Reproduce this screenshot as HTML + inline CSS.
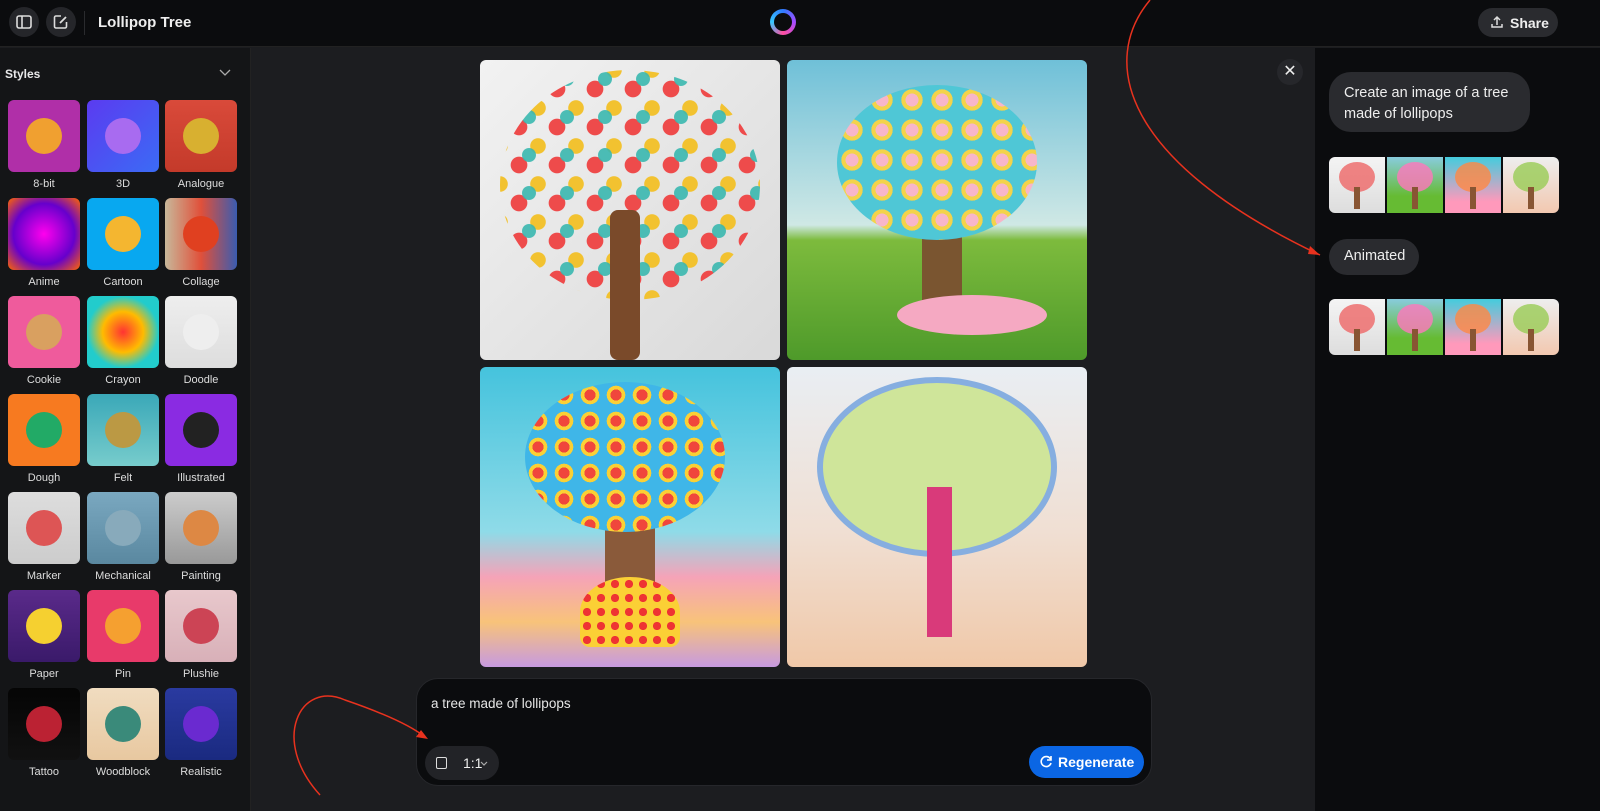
<!DOCTYPE html>
<html><head><meta charset="utf-8"><style>
*{box-sizing:border-box;margin:0;padding:0}
body{width:1600px;height:811px;overflow:hidden;background:#1c1d20;font-family:"Liberation Sans",sans-serif;color:#e8e8ea;position:relative}
.top{position:absolute;left:0;top:0;width:1600px;height:47px;background:#0b0c0e;border-bottom:1px solid #222}
.ib{position:absolute;top:7px;width:30px;height:30px;border-radius:50%;background:#25262a}
.left{position:absolute;left:0;top:48px;width:251px;height:763px;background:#141517;border-right:1px solid #222}
.right{position:absolute;left:1315px;top:48px;width:285px;height:763px;background:#0b0c0e}
.tile{position:absolute;width:72px;height:72px;border-radius:6px;overflow:hidden}
.lab{position:absolute;width:80px;text-align:center;font-size:11px;color:#ddd}
.img{position:absolute;width:300px;height:300px;border-radius:6px;overflow:hidden}
.th{position:absolute;width:56px;height:56px;overflow:hidden}
.bubble{position:absolute;background:#2a2b2f;border-radius:22px;font-size:15px;color:#eee}
</style></head><body>
<div class="top">
 <div class="ib" style="left:9px"><svg width="30" height="30"><rect x="8" y="9" width="14" height="12" rx="2" fill="none" stroke="#ddd" stroke-width="1.6"/><line x1="13" y1="9" x2="13" y2="21" stroke="#ddd" stroke-width="1.6"/></svg></div>
 <div class="ib" style="left:46px"><svg width="30" height="30"><path d="M15 9H10a1.5 1.5 0 0 0-1.5 1.5v9A1.5 1.5 0 0 0 10 21h9a1.5 1.5 0 0 0 1.5-1.5V15" fill="none" stroke="#ddd" stroke-width="1.6"/><path d="M14 16l6-6" stroke="#ddd" stroke-width="1.8"/></svg></div>
 <div style="position:absolute;left:84px;top:11px;width:1px;height:24px;background:#2a2b2e"></div>
 <div style="position:absolute;left:98px;top:14px;font-size:15px;font-weight:bold;color:#eee">Lollipop Tree</div>
 <div style="position:absolute;left:770px;top:9px;width:26px;height:26px;border-radius:50%;background:conic-gradient(#2f7bff,#a54bff,#ff4fa0,#37c8ff,#2f7bff)"><div style="margin:4px;width:18px;height:18px;border-radius:50%;background:#0b0c0e"></div></div>
 <div style="position:absolute;left:1478px;top:8px;width:80px;height:29px;border-radius:15px;background:#2a2b2f;font-size:14px;font-weight:bold;color:#eee;padding:7px 0 0 32px">Share
  <svg style="position:absolute;left:12px;top:7px" width="14" height="14"><path d="M7 10V2M4 5l3-3 3 3M2 9v3h10V9" fill="none" stroke="#ddd" stroke-width="1.5"/></svg></div>
</div>
<div class="left">
 <div style="position:absolute;left:5px;top:19px;font-size:12px;font-weight:bold">Styles</div>
 <svg style="position:absolute;left:219px;top:21px" width="12" height="8"><path d="M1 1l5 5 5-5" fill="none" stroke="#aaa" stroke-width="1.3"/></svg>
</div>
<div id="tiles"></div>
<div class="img" style="left:480px;top:60px;background:linear-gradient(135deg,#f2f2f2,#d9d9d9)">
 <div style="position:absolute;left:20px;top:10px;width:260px;height:230px;border-radius:50%;background:radial-gradient(circle,#ee4b4b 30%,transparent 32%) 0 0/38px 38px,radial-gradient(circle,#f2c230 28%,transparent 30%) 19px 19px/38px 38px"></div>
 <div style="position:absolute;left:20px;top:10px;width:260px;height:230px;border-radius:50%;background:radial-gradient(circle,#3ab8b0 25%,transparent 27%) 10px 28px/38px 38px;opacity:.9"></div>
 <div style="position:absolute;left:130px;top:150px;width:30px;height:150px;background:#7a4a2a;border-radius:8px"></div></div>
<div class="img" style="left:787px;top:60px;background:linear-gradient(#6fc0d8,#cfe8e5 55%,#7dbb3d 60%,#4e9a2a)">
 <div style="position:absolute;left:135px;top:150px;width:40px;height:110px;background:#7a5530"></div>
 <div style="position:absolute;left:50px;top:25px;width:200px;height:155px;border-radius:50%;background:radial-gradient(circle,#f7b6c9 30%,#f3d34a 31%,#f3d34a 50%,#4fc7d6 51%)0 0/30px 30px"></div>
 <div style="position:absolute;left:110px;top:235px;width:150px;height:40px;border-radius:50%;background:#f5a9c2"></div></div>
<div class="img" style="left:480px;top:367px;background:linear-gradient(#45c3dd,#8fdbe8 55%,#f5a3b8 70%,#f8c37a 85%,#c79ae0)">
 <div style="position:absolute;left:125px;top:140px;width:50px;height:110px;background:#8a5a3a"></div>
 <div style="position:absolute;left:45px;top:15px;width:200px;height:150px;border-radius:50%;background:radial-gradient(circle,#f0463c 30%,#fbd035 31%,#fbd035 50%,#3fb6e8 51%)0 0/26px 26px"></div>
 <div style="position:absolute;left:100px;top:210px;width:100px;height:70px;border-radius:50% 50% 10px 10px;background:radial-gradient(circle,#e33 40%,#fbd035 41%)0 0/14px 14px"></div></div>
<div class="img" style="left:787px;top:367px;background:linear-gradient(#e9eef3,#f0dfd3 55%,#f0c8a8)">
 <div style="position:absolute;left:30px;top:10px;width:240px;height:180px;border-radius:50%;background:#cfe59a;border:6px solid #86aee0"></div>
 <div style="position:absolute;left:140px;top:120px;width:25px;height:150px;background:#d93a7a"></div></div>
<div style="position:absolute;left:416px;top:678px;width:736px;height:108px;border-radius:22px;background:#0b0c0e;border:1px solid #26272b">
 <div style="position:absolute;left:14px;top:17px;font-size:13.5px;color:#e6e6e6">a tree made of lollipops</div>
 <div style="position:absolute;left:8px;top:67px;width:74px;height:34px;border-radius:17px;background:#222327;font-size:14px;padding:9px 0 0 38px;color:#eee">1:1</div>
 <div style="position:absolute;left:19px;top:78px;width:11px;height:12px;border:1.5px solid #ddd;border-radius:2px"></div>
 <svg style="position:absolute;left:63px;top:82px" width="8" height="6"><path d="M1 1l3 3 3-3" fill="none" stroke="#aaa" stroke-width="1.2"/></svg>
 <div style="position:absolute;left:612px;top:67px;width:115px;height:32px;border-radius:16px;background:#0b66e4;font-size:14px;font-weight:bold;color:#fff;padding:8px 0 0 29px">Regenerate</div>
 <svg style="position:absolute;left:622px;top:76px" width="14" height="14"><path d="M11.5 4A5 5 0 1 0 12 8" fill="none" stroke="#fff" stroke-width="1.6"/><path d="M12 1v4H8" fill="none" stroke="#fff" stroke-width="1.6"/></svg>
</div>
<div class="right">
 <div style="position:absolute;left:-38px;top:11px;width:26px;height:26px;border-radius:50%;background:#26272b;color:#eee;font-size:16px;text-align:center;line-height:26px">✕</div>
 <div class="bubble" style="left:14px;top:24px;width:201px;height:60px;padding:11px 15px;line-height:21px;font-size:14.5px">Create an image of a tree made of lollipops</div>
 <div class="bubble" style="left:14px;top:191px;width:90px;height:36px;padding:9px 15px;font-size:14.5px">Animated</div>
</div>
<div id="thumbs"></div>
<svg style="position:absolute;left:0;top:0" width="1600" height="811"><path d="M1150 0C1100 60 1120 160 1320 255" fill="none" stroke="#e8321e" stroke-width="1.5"/><path d="M1320 255l-10-9 -2 8z" fill="#e8321e"/><path d="M320 795C270 740 300 680 345 700 380 712 410 725 425 737" fill="none" stroke="#e8321e" stroke-width="1.5"/><path d="M428 739l-12-2 5-7z" fill="#e8321e"/></svg>
<script>
var n=[["8-bit","linear-gradient(#b02fa8,#b02fa8)","#f0a030"],["3D","linear-gradient(135deg,#5b3bf0,#3b6bf5)","#a86bf0"],["Analogue","linear-gradient(#d94a3a,#c43a2a)","#d8b030"],["Anime","radial-gradient(#f0e,#60c 60%,#f60)","#fff0"],["Cartoon","linear-gradient(#08a8f0,#08a8f0)","#f4b630"],["Collage","linear-gradient(90deg,#c8b89a,#e0503a 50%,#3a5cb0)","#e04020"],["Cookie","linear-gradient(#ef5b9c,#ef5b9c)","#d9a060"],["Crayon","radial-gradient(#f33,#fb0 40%,#2cc 70%)","#fff0"],["Doodle","linear-gradient(#eee,#ddd)","#eee"],["Dough","linear-gradient(#f77a20,#f77a20)","#2a6"],["Felt","linear-gradient(#3aa8b8,#7cc)","#b94"],["Illustrated","linear-gradient(#8a2be2,#8a2be2)","#222"],["Marker","linear-gradient(#ddd,#ccc)","#d55"],["Mechanical","linear-gradient(#7aa8c0,#5a88a0)","#8ab"],["Painting","linear-gradient(#ccc,#999)","#d84"],["Paper","linear-gradient(#5a2a8a,#3a1a6a)","#f5d030"],["Pin","linear-gradient(#e83a6a,#e83a6a)","#f5a030"],["Plushie","linear-gradient(#e8c8cc,#d8b0b8)","#c45"],["Tattoo","linear-gradient(#050505,#111)","#b23"],["Woodblock","linear-gradient(#f0dcc0,#e8c8a0)","#3a8a7a"],["Realistic","linear-gradient(#2a3aa0,#1a2a80)","#6a2ad0"]];
var h="";n.forEach(function(t,i){var c=i%3,r=Math.floor(i/3),x=[8,87,165][c],y=100+r*98;
h+='<div class="tile" style="left:'+x+'px;top:'+y+'px;background:'+t[1]+'"><div style="position:absolute;left:18px;top:18px;width:36px;height:36px;border-radius:50%;background:'+t[2]+'"></div></div><div class="lab" style="left:'+(x-4)+'px;top:'+(y+78)+'px">'+t[0]+'</div>';});
document.getElementById("tiles").innerHTML=h;
var bg=["linear-gradient(#f4f4f4,#ddd)","linear-gradient(#8cd,#6b3 70%)","linear-gradient(#4cd,#f9b 80%)","linear-gradient(#eee,#f2c8b0)"],tc=["#e66","#f7b","#f84","#9c5"];
var k="";[157,299].forEach(function(y){for(var i=0;i<4;i++){k+='<div class="th" style="left:'+(1329+i*58)+'px;top:'+y+'px;background:'+bg[i]+';border-radius:'+(i==0?'6px 0 0 6px':i==3?'0 6px 6px 0':'0')+'"><div style="position:absolute;left:10px;top:5px;width:36px;height:30px;border-radius:50%;background:'+tc[i]+';opacity:.8"></div><div style="position:absolute;left:25px;top:30px;width:6px;height:22px;background:#853"></div></div>';}});
document.getElementById("thumbs").innerHTML=k;
</script>
</body></html>
